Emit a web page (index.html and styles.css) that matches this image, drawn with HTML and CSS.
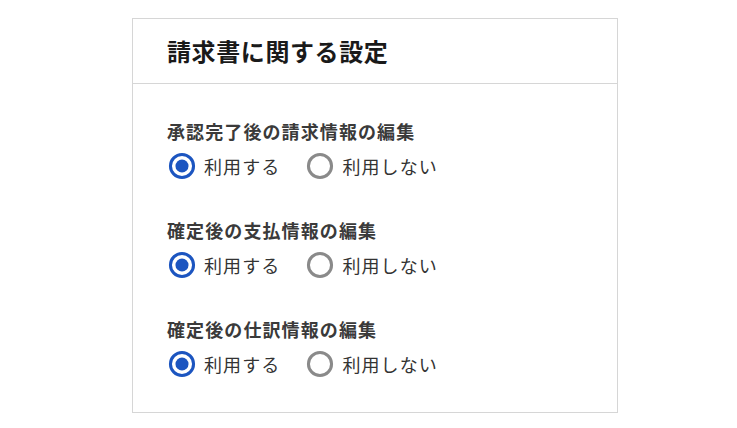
FILE: index.html
```html
<!DOCTYPE html>
<html lang="ja">
<head>
<meta charset="utf-8">
<link rel="stylesheet" href="styles.css">
</head>
<body>
<section class="card">
  <header class="card-header">
    <h2 class="card-title">請求書に関する設定</h2>
  </header>
  <div class="card-body">
    <div class="setting">
      <div class="setting-label">承認完了後の請求情報の編集</div>
      <div class="radios">
        <label class="radio">
          <svg class="radio-icon" viewBox="0 0 24 24"><circle cx="12" cy="12" r="9.9" class="ring on"/><circle cx="12" cy="12" r="5.6" class="dot"/></svg>
          <span>利用する</span>
        </label>
        <label class="radio">
          <svg class="radio-icon" viewBox="0 0 24 24"><circle cx="12" cy="12" r="9.9" class="ring off"/></svg>
          <span>利用しない</span>
        </label>
      </div>
    </div>
    <div class="setting">
      <div class="setting-label">確定後の支払情報の編集</div>
      <div class="radios">
        <label class="radio">
          <svg class="radio-icon" viewBox="0 0 24 24"><circle cx="12" cy="12" r="9.9" class="ring on"/><circle cx="12" cy="12" r="5.6" class="dot"/></svg>
          <span>利用する</span>
        </label>
        <label class="radio">
          <svg class="radio-icon" viewBox="0 0 24 24"><circle cx="12" cy="12" r="9.9" class="ring off"/></svg>
          <span>利用しない</span>
        </label>
      </div>
    </div>
    <div class="setting">
      <div class="setting-label">確定後の仕訳情報の編集</div>
      <div class="radios">
        <label class="radio">
          <svg class="radio-icon" viewBox="0 0 24 24"><circle cx="12" cy="12" r="9.9" class="ring on"/><circle cx="12" cy="12" r="5.6" class="dot"/></svg>
          <span>利用する</span>
        </label>
        <label class="radio">
          <svg class="radio-icon" viewBox="0 0 24 24"><circle cx="12" cy="12" r="9.9" class="ring off"/></svg>
          <span>利用しない</span>
        </label>
      </div>
    </div>
  </div>
</section>
</body>
</html>
```
FILE: styles.css
```css
html, body {
  margin: 0;
  padding: 0;
  background: #ffffff;
}
body {
  font-family: "Noto Sans CJK JP", "Noto Sans", sans-serif;
  color: #333333;
  padding-top: 18px;
  padding-left: 132px;
}
.card {
  width: 484px;
  border: 1px solid #d6d6d6;
  box-sizing: content-box;
}
.card-header {
  height: 64px;
  border-bottom: 1px solid #d6d6d6;
  display: flex;
  align-items: center;
  padding-left: 34px;
}
.card-title {
  margin: 0;
  font-size: 24px;
  font-weight: 700;
  letter-spacing: 0.6px;
  color: #1a1a1a;
  line-height: 30px;
}
.card-body {
  padding: 35px 34px 36px;
  display: flex;
  flex-direction: column;
  gap: 40px;
}
.setting {
  display: flex;
  flex-direction: column;
  gap: 11px;
}
.setting-label {
  font-size: 18px;
  font-weight: 700;
  letter-spacing: 1.1px;
  line-height: 24px;
  color: #3a3a3a;
}
.radios {
  display: flex;
  align-items: center;
  gap: 26px;
  padding-left: 1px;
}
.radio {
  display: flex;
  align-items: center;
  gap: 8px;
  font-size: 18px;
  letter-spacing: 1.1px;
  line-height: 24px;
  color: #333333;
}
.radio-icon {
  width: 28px;
  height: 28px;
  margin: -2px 0;
  display: block;
}
.ring {
  fill: none;
  stroke-width: 2.6;
}
.ring.on { stroke: #1c55c0; }
.ring.off { stroke: #8a8a8a; }
.dot { fill: #1c55c0; }
```
